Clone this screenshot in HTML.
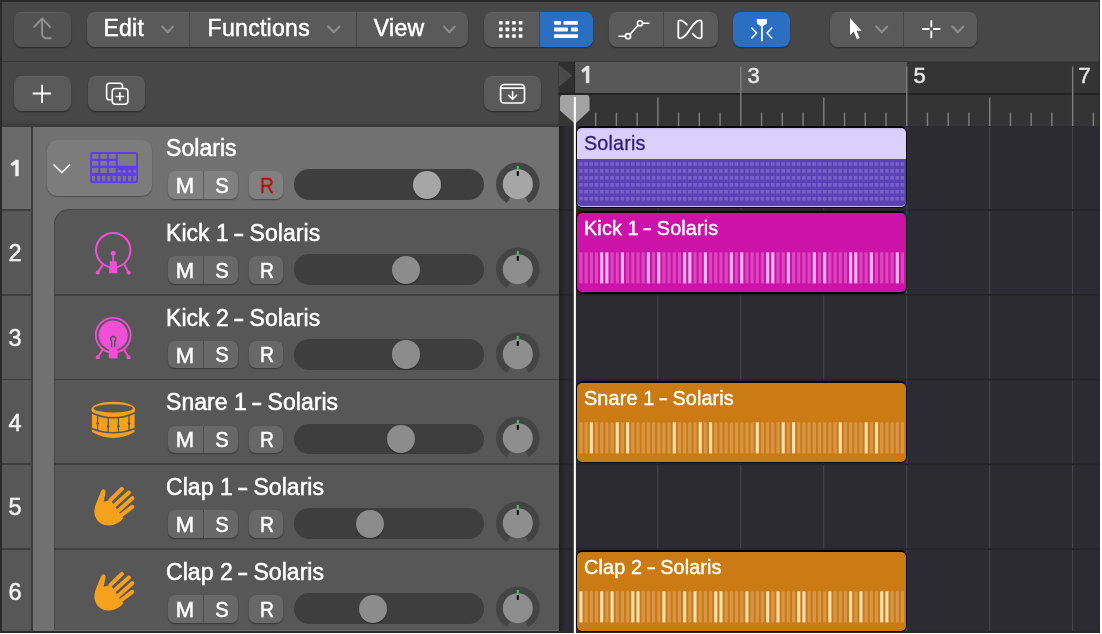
<!DOCTYPE html>
<html><head><meta charset="utf-8"><style>
html,body{margin:0;padding:0;width:1102px;height:634px;overflow:hidden;background:#fff;font-family:"Liberation Sans", sans-serif;}
#root{position:relative;width:1102px;height:634px;overflow:hidden;will-change:transform;}
svg{overflow:visible}
</style></head><body><div id="root">
<div style="position:absolute;left:0px;top:0px;width:1100px;height:633px;background:#2a2a2a"></div><div style="position:absolute;left:2px;top:2px;width:1097px;height:58.5px;background:#474747;box-shadow:inset 0 1px 0 rgba(255,255,255,.03)"></div><div style="position:absolute;left:2px;top:60.5px;width:1097px;height:1px;background:#3a3a3a"></div><div style="position:absolute;left:2px;top:61.5px;width:557px;height:65.5px;background:#474747"></div><div style="position:absolute;left:2px;top:123px;width:557px;height:4px;background:linear-gradient(#474747,#3f3f3f)"></div><div style="position:absolute;left:14px;top:12px;width:57px;height:35px;background:#525252;border-radius:8px;box-shadow:inset 0 1px 0 rgba(255,255,255,.07),0 1px 1.5px rgba(0,0,0,.45)"></div><svg style="position:absolute;left:14px;top:12px;" width="57" height="35" viewBox="14 12 57 35"><path d="M34.2 26.8 L42.1 18.3 L50 26.8 M42.1 18.8 L42.1 33.5 Q42.1 38.3 47 38.3 L50.8 38.3" fill="none" stroke="#929292" stroke-width="1.9" stroke-linecap="round" stroke-linejoin="round"/></svg><div style="position:absolute;left:87px;top:12px;width:381px;height:35px;background:#5a5a5a;border-radius:8px;box-shadow:inset 0 1px 0 rgba(255,255,255,.05),0 1px 1.5px rgba(0,0,0,.45)"></div><div style="position:absolute;left:189.3px;top:12px;width:1px;height:35px;background:#444"></div><div style="position:absolute;left:355.5px;top:12px;width:1px;height:35px;background:#444"></div><div style="position:absolute;left:103.4px;top:16.50px;font-size:23px;line-height:23px;color:#fff;white-space:nowrap;letter-spacing:0.3px;-webkit-text-stroke:0.5px #fff;">Edit</div><div style="position:absolute;left:207.6px;top:16.50px;font-size:23px;line-height:23px;color:#fff;white-space:nowrap;letter-spacing:0.3px;-webkit-text-stroke:0.5px #fff;">Functions</div><div style="position:absolute;left:373.8px;top:16.50px;font-size:23px;line-height:23px;color:#fff;white-space:nowrap;letter-spacing:0.3px;-webkit-text-stroke:0.5px #fff;">View</div><svg style="position:absolute;left:150px;top:15px;" width="320" height="30" viewBox="150 15 320 30"><path d="M162.4 26.6 L167.7 32.3 L173.0 26.6" fill="none" stroke="#8e8e8e" stroke-width="2.1" stroke-linecap="round" stroke-linejoin="round"/><path d="M328.2 26.6 L333.79999999999995 32.3 L339.4 26.6" fill="none" stroke="#8e8e8e" stroke-width="2.1" stroke-linecap="round" stroke-linejoin="round"/><path d="M444.1 26.6 L449.35 32.3 L454.6 26.6" fill="none" stroke="#8e8e8e" stroke-width="2.1" stroke-linecap="round" stroke-linejoin="round"/></svg><div style="position:absolute;left:484px;top:12px;width:109px;height:35px;background:#5a5a5a;border-radius:8px;box-shadow:inset 0 1px 0 rgba(255,255,255,.05),0 1px 1.5px rgba(0,0,0,.45)"></div><div style="position:absolute;left:539px;top:12px;width:54px;height:35px;background:#2b6fc3;border-radius:0 8px 8px 0"></div><div style="position:absolute;left:538.5px;top:12px;width:1px;height:35px;background:#444"></div><svg style="position:absolute;left:484px;top:12px;" width="109" height="35" viewBox="484 12 109 35"><rect x="499" y="21" width="3.6" height="3.6" rx="0.6" fill="#fff"/><rect x="499" y="27.6" width="3.6" height="3.6" rx="0.6" fill="#fff"/><rect x="499" y="34.2" width="3.6" height="3.6" rx="0.6" fill="#fff"/><rect x="505.6" y="21" width="3.6" height="3.6" rx="0.6" fill="#fff"/><rect x="505.6" y="27.6" width="3.6" height="3.6" rx="0.6" fill="#fff"/><rect x="505.6" y="34.2" width="3.6" height="3.6" rx="0.6" fill="#fff"/><rect x="512.2" y="21" width="3.6" height="3.6" rx="0.6" fill="#fff"/><rect x="512.2" y="27.6" width="3.6" height="3.6" rx="0.6" fill="#fff"/><rect x="512.2" y="34.2" width="3.6" height="3.6" rx="0.6" fill="#fff"/><rect x="518.8" y="21" width="3.6" height="3.6" rx="0.6" fill="#fff"/><rect x="518.8" y="27.6" width="3.6" height="3.6" rx="0.6" fill="#fff"/><rect x="518.8" y="34.2" width="3.6" height="3.6" rx="0.6" fill="#fff"/><rect x="554" y="21" width="7" height="3.8" rx="0.8" fill="#fff"/><rect x="563.5" y="21" width="14.5" height="3.8" rx="0.8" fill="#fff"/><rect x="554" y="27.6" width="14" height="3.8" rx="0.8" fill="#fff"/><rect x="571" y="27.6" width="7" height="3.8" rx="0.8" fill="#fff"/><rect x="554" y="34.2" width="24" height="3.8" rx="0.8" fill="#fff"/></svg><div style="position:absolute;left:609px;top:12px;width:108.5px;height:35px;background:#5a5a5a;border-radius:8px;box-shadow:inset 0 1px 0 rgba(255,255,255,.05),0 1px 1.5px rgba(0,0,0,.45)"></div><div style="position:absolute;left:663px;top:12px;width:1px;height:35px;background:#444"></div><svg style="position:absolute;left:609px;top:12px;" width="109" height="35" viewBox="609 12 109 35"><path d="M619 36.2 L625.5 36.2 M630.2 34.3 L638 25.3 M642.5 23.3 L649 23.3" stroke="#fff" stroke-width="1.6" stroke-linecap="round" fill="none"/><circle cx="628" cy="36.2" r="2.6" stroke="#fff" stroke-width="1.6" fill="none"/><circle cx="640" cy="23.3" r="2.6" stroke="#fff" stroke-width="1.6" fill="none"/><path d="M686.8 24.7 C684.5 22 682 20.3 680 20.3 Q678.3 20.3 678.3 22.3 L678.3 36.3 Q678.3 38.3 680.3 38.3 C688 38.3 692 20.3 699.7 20.3 Q701.7 20.3 701.7 22.3 L701.7 36.3 Q701.7 38.3 699.7 38.3 C697.5 38.3 695 36.5 692.7 33.7" stroke="#fff" stroke-width="1.8" fill="none" stroke-linecap="round" stroke-linejoin="round"/></svg><div style="position:absolute;left:733px;top:12px;width:57px;height:35px;background:#2b6fc3;border-radius:8px;box-shadow:0 1px 1.5px rgba(0,0,0,.45)"></div><svg style="position:absolute;left:733px;top:12px;" width="57" height="35" viewBox="733 12 57 35"><path d="M756.8 18.9 L767 18.9 L767 22 Q767 24.5 764 25.3 L762.8 26.2 L760.8 26.2 L759.6 25.3 Q756.8 24.5 756.8 22 Z" fill="#fff"/><rect x="761" y="25" width="1.8" height="16.3" fill="#fff"/><path d="M751.8 28 L756.6 33 L751.8 38 M771.8 28 L767 33 L771.8 38" stroke="#fff" stroke-width="1.5" fill="none" stroke-linecap="round" stroke-linejoin="round"/></svg><div style="position:absolute;left:830px;top:12px;width:146.5px;height:35px;background:#5a5a5a;border-radius:8px;box-shadow:inset 0 1px 0 rgba(255,255,255,.05),0 1px 1.5px rgba(0,0,0,.45)"></div><div style="position:absolute;left:903.2px;top:12px;width:1px;height:35px;background:#444"></div><svg style="position:absolute;left:825px;top:10px;" width="160" height="40" viewBox="825 10 160 40"><path d="M850 17.9 L850 35.2 L853.6 31.6 L857 39.3 L859.7 38.1 L856.4 30.7 L861.5 30.7 Z" fill="#fff"/><path d="M922 29 L929.5 29 M933 29 L940.4 29 M931.3 20.3 L931.3 27.2 M931.3 30.8 L931.3 38.2" stroke="#fff" stroke-width="1.8" fill="none" stroke-linecap="butt"/><path d="M876.2 26.6 L881.7 32.3 L887.2 26.6" fill="none" stroke="#8e8e8e" stroke-width="2.1" stroke-linecap="round" stroke-linejoin="round"/><path d="M952.4 26.6 L957.8499999999999 32.3 L963.3 26.6" fill="none" stroke="#8e8e8e" stroke-width="2.1" stroke-linecap="round" stroke-linejoin="round"/></svg><div style="position:absolute;left:14px;top:76px;width:57px;height:35px;background:#5a5a5a;border-radius:8px;box-shadow:inset 0 1px 0 rgba(255,255,255,.05),0 1px 1.5px rgba(0,0,0,.45)"></div><svg style="position:absolute;left:14px;top:76px;" width="57" height="35" viewBox="14 76 57 35"><path d="M32.7 93.5 L51.1 93.5 M42.1 84.8 L42.1 102.9" stroke="#fff" stroke-width="1.8" fill="none"/></svg><div style="position:absolute;left:88px;top:76px;width:57px;height:35px;background:#5a5a5a;border-radius:8px;box-shadow:inset 0 1px 0 rgba(255,255,255,.05),0 1px 1.5px rgba(0,0,0,.45)"></div><svg style="position:absolute;left:88px;top:76px;" width="57" height="35" viewBox="88 76 57 35"><path d="M111.8 99.8 L109.5 99.8 Q106.6 99.8 106.6 96.9 L106.6 86.2 Q106.6 83.3 109.5 83.3 L119.6 83.3 Q122.5 83.3 122.5 86.2 L122.5 88.4" stroke="#fff" stroke-width="1.6" fill="none"/><rect x="112.2" y="88.5" width="15.7" height="15.8" rx="3.2" stroke="#fff" stroke-width="1.6" fill="none"/><path d="M119.9 92.2 L119.9 100.8 M115.6 96.5 L124.2 96.5" stroke="#fff" stroke-width="1.7" fill="none"/></svg><div style="position:absolute;left:484px;top:76px;width:57px;height:35px;background:#5a5a5a;border-radius:8px;box-shadow:inset 0 1px 0 rgba(255,255,255,.05),0 1px 1.5px rgba(0,0,0,.45)"></div><svg style="position:absolute;left:484px;top:76px;" width="57" height="35" viewBox="484 76 57 35"><rect x="500.6" y="84.5" width="23.9" height="18.5" rx="3.4" stroke="#fff" stroke-width="1.7" fill="none"/><path d="M500.6 88.1 L524.5 88.1" stroke="#fff" stroke-width="1.7"/><path d="M512.6 91.6 L512.6 99.2 M508.6 95.3 L512.6 99.3 L516.6 95.3" stroke="#fff" stroke-width="1.6" fill="none" stroke-linecap="round" stroke-linejoin="round"/></svg><div style="position:absolute;left:557.5px;top:61.5px;width:1.5px;height:65px;background:#3c3c3c"></div><div style="position:absolute;left:559px;top:61.5px;width:540px;height:31.5px;background:#343434"></div><div style="position:absolute;left:575px;top:61.5px;width:331.5px;height:32px;background:#585858"></div><div style="position:absolute;left:559px;top:61.5px;width:15.5px;height:31.5px;background:#2f2f2f"></div><div style="position:absolute;left:559px;top:93.3px;width:540px;height:32.7px;background:#343434"></div><div style="position:absolute;left:559px;top:93.3px;width:540px;height:1.5px;background:#222222"></div><svg style="position:absolute;left:559px;top:61.5px;" width="20" height="32" viewBox="559 61.5 20 32"><path d="M559 64.5 L572.4 75 L559 86.2 Z" fill="#494949"/><line x1="574.5" y1="62" x2="574.5" y2="93" stroke="#1e1e1e" stroke-width="1.2" stroke-dasharray="1.2 1.2"/></svg><svg style="position:absolute;left:559px;top:61.5px;" width="540" height="65" viewBox="559 61.5 540 65"><rect x="594.94" y="112" width="1.4" height="14" fill="#7f7f7f"/><rect x="615.68" y="112" width="1.4" height="14" fill="#7f7f7f"/><rect x="636.42" y="112" width="1.4" height="14" fill="#7f7f7f"/><rect x="657.16" y="97" width="1.4" height="29" fill="#7f7f7f"/><rect x="677.90" y="112" width="1.4" height="14" fill="#7f7f7f"/><rect x="698.64" y="112" width="1.4" height="14" fill="#7f7f7f"/><rect x="719.38" y="112" width="1.4" height="14" fill="#7f7f7f"/><rect x="740.12" y="66" width="1.4" height="60" fill="#7f7f7f"/><rect x="760.86" y="112" width="1.4" height="14" fill="#7f7f7f"/><rect x="781.60" y="112" width="1.4" height="14" fill="#7f7f7f"/><rect x="802.34" y="112" width="1.4" height="14" fill="#7f7f7f"/><rect x="823.08" y="97" width="1.4" height="29" fill="#7f7f7f"/><rect x="843.82" y="112" width="1.4" height="14" fill="#7f7f7f"/><rect x="864.56" y="112" width="1.4" height="14" fill="#7f7f7f"/><rect x="885.30" y="112" width="1.4" height="14" fill="#7f7f7f"/><rect x="906.04" y="66" width="1.4" height="60" fill="#7f7f7f"/><rect x="926.78" y="112" width="1.4" height="14" fill="#7f7f7f"/><rect x="947.52" y="112" width="1.4" height="14" fill="#7f7f7f"/><rect x="968.26" y="112" width="1.4" height="14" fill="#7f7f7f"/><rect x="989.00" y="97" width="1.4" height="29" fill="#7f7f7f"/><rect x="1009.74" y="112" width="1.4" height="14" fill="#7f7f7f"/><rect x="1030.48" y="112" width="1.4" height="14" fill="#7f7f7f"/><rect x="1051.22" y="112" width="1.4" height="14" fill="#7f7f7f"/><rect x="1071.96" y="66" width="1.4" height="60" fill="#7f7f7f"/><rect x="1092.70" y="112" width="1.4" height="14" fill="#7f7f7f"/></svg><div style="position:absolute;left:747.5px;top:64.50px;font-size:22px;line-height:22px;color:#e6e6e6;white-space:nowrap;letter-spacing:0.0px;-webkit-text-stroke:0.5px #e6e6e6;">3</div><div style="position:absolute;left:913.5px;top:64.50px;font-size:22px;line-height:22px;color:#e6e6e6;white-space:nowrap;letter-spacing:0.0px;-webkit-text-stroke:0.5px #e6e6e6;">5</div><div style="position:absolute;left:1078.5px;top:64.50px;font-size:22px;line-height:22px;color:#e6e6e6;white-space:nowrap;letter-spacing:0.0px;-webkit-text-stroke:0.5px #e6e6e6;">7</div><svg style="position:absolute;left:575px;top:60px;" width="20" height="30" viewBox="575 60 20 30"><path d="M589.1 66.1 L589.1 82.9 L586.1 82.9 L586.1 70.2 L582.9 72.6 L581.5 70.3 L586.6 66.1 Z" fill="#e6e6e6" stroke="#e6e6e6" stroke-width="0.4" stroke-linejoin="round"/></svg><div style="position:absolute;left:559px;top:126px;width:540px;height:504.5px;background:#2c2b33"></div><svg style="position:absolute;left:559px;top:126.5px;" width="540" height="505" viewBox="559 126.5 540 505"><rect x="657.16" y="126.5" width="1.2" height="504" fill="#45434d"/><rect x="740.12" y="126.5" width="1.2" height="504" fill="#45434d"/><rect x="823.08" y="126.5" width="1.2" height="504" fill="#45434d"/><rect x="906.04" y="126.5" width="1.2" height="504" fill="#45434d"/><rect x="989.00" y="126.5" width="1.2" height="504" fill="#45434d"/><rect x="1071.96" y="126.5" width="1.2" height="504" fill="#45434d"/><rect x="559" y="208.77" width="540" height="1.6" fill="#25242b"/><rect x="559" y="293.54" width="540" height="1.6" fill="#25242b"/><rect x="559" y="378.31" width="540" height="1.6" fill="#25242b"/><rect x="559" y="463.08" width="540" height="1.6" fill="#25242b"/><rect x="559" y="547.85" width="540" height="1.6" fill="#25242b"/></svg><div style="position:absolute;left:559px;top:126px;width:7px;height:504.5px;background:linear-gradient(90deg,rgba(0,0,0,.28),rgba(0,0,0,0))"></div><div style="position:absolute;left:2px;top:127px;width:29px;height:503.5px;background:#575757"></div><div style="position:absolute;left:2px;top:127px;width:29px;height:82.77px;background:#6a6a6a"></div><div style="position:absolute;left:31px;top:126.5px;width:2px;height:504px;background:#3c3c3c"></div><div style="position:absolute;left:33px;top:127px;width:526px;height:503.5px;background:#717171"></div><div style="position:absolute;left:53.6px;top:209.3px;width:505.4px;height:421.2px;background:#454545;border-top-left-radius:15px"></div><div style="position:absolute;left:54.7px;top:210.4px;width:504.3px;height:420.1px;background:#575757;border-top-left-radius:14px"></div><div style="position:absolute;left:2px;top:119px;width:557px;height:8px;background:linear-gradient(rgba(0,0,0,0),rgba(0,0,0,.13))"></div><div style="position:absolute;left:2px;top:208.97px;width:29px;height:1.8px;background:#3e3e3e"></div><div style="position:absolute;left:2px;top:293.74px;width:29px;height:1.8px;background:#3e3e3e"></div><div style="position:absolute;left:54.7px;top:293.74px;width:504.3px;height:1.8px;background:#414141"></div><div style="position:absolute;left:2px;top:378.51px;width:29px;height:1.8px;background:#3e3e3e"></div><div style="position:absolute;left:54.7px;top:378.51px;width:504.3px;height:1.8px;background:#414141"></div><div style="position:absolute;left:2px;top:463.28px;width:29px;height:1.8px;background:#3e3e3e"></div><div style="position:absolute;left:54.7px;top:463.28px;width:504.3px;height:1.8px;background:#414141"></div><div style="position:absolute;left:2px;top:548.05px;width:29px;height:1.8px;background:#3e3e3e"></div><div style="position:absolute;left:54.7px;top:548.05px;width:504.3px;height:1.8px;background:#414141"></div><svg style="position:absolute;left:5px;top:150px;" width="20" height="30" viewBox="5 150 20 30"><path d="M18.5 159.9 L18.5 175.9 L15.4 175.9 L15.4 164.0 L12.1 166.2 L10.8 163.8 L15.9 159.9 Z" fill="#f2f2f2" stroke="#f2f2f2" stroke-width="0.4" stroke-linejoin="round"/></svg><div style="position:absolute;left:166px;top:136.50px;font-size:23px;line-height:23px;color:#fff;white-space:nowrap;letter-spacing:0.05px;-webkit-text-stroke:0.5px #fff;">Solaris</div><div style="position:absolute;left:168px;top:171.30px;width:70px;height:27.6px;background:#808080;border-radius:7px;box-shadow:0 1px 1.5px rgba(0,0,0,.4)"></div><div style="position:absolute;left:203px;top:171.30px;width:1px;height:27.6px;background:#5e5e5e"></div><div style="position:absolute;left:249px;top:171.30px;width:34.2px;height:27.6px;background:#808080;border-radius:7px;box-shadow:0 1px 1.5px rgba(0,0,0,.4)"></div><div style="position:absolute;left:135px;width:100px;text-align:center;top:174.50px;font-size:22px;line-height:22px;color:#fff;white-space:nowrap;letter-spacing:0.0px;-webkit-text-stroke:0.5px #fff;">M</div><div style="position:absolute;left:171.5px;width:100px;text-align:center;top:175.25px;font-size:22.5px;line-height:22.5px;color:#fff;white-space:nowrap;letter-spacing:0.0px;-webkit-text-stroke:0.5px #fff;transform:scaleX(0.9);">S</div><div style="position:absolute;left:217.39999999999998px;width:100px;text-align:center;top:175.25px;font-size:22.5px;line-height:22.5px;color:#bb0f0d;white-space:nowrap;letter-spacing:0.0px;-webkit-text-stroke:0.3px #bb0f0d;transform:scaleX(0.86);">R</div><div style="position:absolute;left:294px;top:169.40px;width:190px;height:30.6px;background:#3e3e3e;border-radius:15.3px"></div><div style="position:absolute;left:412.90px;top:170.90px;width:28.2px;height:28.2px;background:#a6a6a6;border-radius:50%;box-shadow:0 1px 1px rgba(0,0,0,.35)"></div><svg style="position:absolute;left:490px;top:156.00px;" width="60" height="60" viewBox="490 156.00 60 60"><path d="M508.70 199.96 A18.2 18.2 0 1 1 526.90 199.96" stroke="#444444" stroke-width="7" fill="none"/><circle cx="517.8" cy="184.20" r="15" fill="#a6a6a6"/><rect x="516.8" y="165.90" width="2" height="3.8" fill="#3ed35a"/><rect x="516.8" y="171.00" width="2" height="4.8" fill="#000"/></svg><div style="position:absolute;left:-35px;width:100px;text-align:center;top:242.25px;font-size:23.5px;line-height:23.5px;color:#f2f2f2;white-space:nowrap;letter-spacing:0.0px;-webkit-text-stroke:0.5px #f2f2f2;">2</div><div style="position:absolute;left:166px;top:221.50px;font-size:23px;line-height:23px;color:#fff;white-space:nowrap;letter-spacing:0.05px;-webkit-text-stroke:0.5px #fff;">Kick 1 <span style="display:inline-block;transform:scaleX(1.45)">-</span> Solaris</div><div style="position:absolute;left:168px;top:256.07px;width:70px;height:27.6px;background:#686868;border-radius:7px;box-shadow:0 1px 1.5px rgba(0,0,0,.4)"></div><div style="position:absolute;left:203px;top:256.07px;width:1px;height:27.6px;background:#4d4d4d"></div><div style="position:absolute;left:249px;top:256.07px;width:34.2px;height:27.6px;background:#686868;border-radius:7px;box-shadow:0 1px 1.5px rgba(0,0,0,.4)"></div><div style="position:absolute;left:135px;width:100px;text-align:center;top:259.50px;font-size:22px;line-height:22px;color:#fff;white-space:nowrap;letter-spacing:0.0px;-webkit-text-stroke:0.5px #fff;">M</div><div style="position:absolute;left:171.5px;width:100px;text-align:center;top:260.25px;font-size:22.5px;line-height:22.5px;color:#fff;white-space:nowrap;letter-spacing:0.0px;-webkit-text-stroke:0.5px #fff;transform:scaleX(0.9);">S</div><div style="position:absolute;left:217.39999999999998px;width:100px;text-align:center;top:260.25px;font-size:22.5px;line-height:22.5px;color:#fff;white-space:nowrap;letter-spacing:0.0px;-webkit-text-stroke:0.5px #fff;transform:scaleX(0.86);">R</div><div style="position:absolute;left:294px;top:254.17px;width:190px;height:30.6px;background:#3e3e3e;border-radius:15.3px"></div><div style="position:absolute;left:392.10px;top:255.67px;width:28.2px;height:28.2px;background:#8c8c8c;border-radius:50%;box-shadow:0 1px 1px rgba(0,0,0,.35)"></div><svg style="position:absolute;left:490px;top:240.77px;" width="60" height="60" viewBox="490 240.77 60 60"><path d="M508.70 284.73 A18.2 18.2 0 1 1 526.90 284.73" stroke="#444444" stroke-width="7" fill="none"/><circle cx="517.8" cy="268.97" r="15" fill="#8e8e8e"/><rect x="516.8" y="250.67" width="2" height="3.8" fill="#3ed35a"/><rect x="516.8" y="255.77" width="2" height="4.8" fill="#000"/></svg><div style="position:absolute;left:-35px;width:100px;text-align:center;top:327.25px;font-size:23.5px;line-height:23.5px;color:#f2f2f2;white-space:nowrap;letter-spacing:0.0px;-webkit-text-stroke:0.5px #f2f2f2;">3</div><div style="position:absolute;left:166px;top:306.50px;font-size:23px;line-height:23px;color:#fff;white-space:nowrap;letter-spacing:0.05px;-webkit-text-stroke:0.5px #fff;">Kick 2 <span style="display:inline-block;transform:scaleX(1.45)">-</span> Solaris</div><div style="position:absolute;left:168px;top:340.84px;width:70px;height:27.6px;background:#686868;border-radius:7px;box-shadow:0 1px 1.5px rgba(0,0,0,.4)"></div><div style="position:absolute;left:203px;top:340.84px;width:1px;height:27.6px;background:#4d4d4d"></div><div style="position:absolute;left:249px;top:340.84px;width:34.2px;height:27.6px;background:#686868;border-radius:7px;box-shadow:0 1px 1.5px rgba(0,0,0,.4)"></div><div style="position:absolute;left:135px;width:100px;text-align:center;top:344.50px;font-size:22px;line-height:22px;color:#fff;white-space:nowrap;letter-spacing:0.0px;-webkit-text-stroke:0.5px #fff;">M</div><div style="position:absolute;left:171.5px;width:100px;text-align:center;top:344.25px;font-size:22.5px;line-height:22.5px;color:#fff;white-space:nowrap;letter-spacing:0.0px;-webkit-text-stroke:0.5px #fff;transform:scaleX(0.9);">S</div><div style="position:absolute;left:217.39999999999998px;width:100px;text-align:center;top:344.25px;font-size:22.5px;line-height:22.5px;color:#fff;white-space:nowrap;letter-spacing:0.0px;-webkit-text-stroke:0.5px #fff;transform:scaleX(0.86);">R</div><div style="position:absolute;left:294px;top:338.94px;width:190px;height:30.6px;background:#3e3e3e;border-radius:15.3px"></div><div style="position:absolute;left:392.10px;top:340.44px;width:28.2px;height:28.2px;background:#8c8c8c;border-radius:50%;box-shadow:0 1px 1px rgba(0,0,0,.35)"></div><svg style="position:absolute;left:490px;top:325.54px;" width="60" height="60" viewBox="490 325.54 60 60"><path d="M508.70 369.50 A18.2 18.2 0 1 1 526.90 369.50" stroke="#444444" stroke-width="7" fill="none"/><circle cx="517.8" cy="353.74" r="15" fill="#8e8e8e"/><rect x="516.8" y="335.44" width="2" height="3.8" fill="#3ed35a"/><rect x="516.8" y="340.54" width="2" height="4.8" fill="#000"/></svg><div style="position:absolute;left:-35px;width:100px;text-align:center;top:412.25px;font-size:23.5px;line-height:23.5px;color:#f2f2f2;white-space:nowrap;letter-spacing:0.0px;-webkit-text-stroke:0.5px #f2f2f2;">4</div><div style="position:absolute;left:166px;top:390.50px;font-size:23px;line-height:23px;color:#fff;white-space:nowrap;letter-spacing:0.05px;-webkit-text-stroke:0.5px #fff;">Snare 1 <span style="display:inline-block;transform:scaleX(1.45)">-</span> Solaris</div><div style="position:absolute;left:168px;top:425.61px;width:70px;height:27.6px;background:#686868;border-radius:7px;box-shadow:0 1px 1.5px rgba(0,0,0,.4)"></div><div style="position:absolute;left:203px;top:425.61px;width:1px;height:27.6px;background:#4d4d4d"></div><div style="position:absolute;left:249px;top:425.61px;width:34.2px;height:27.6px;background:#686868;border-radius:7px;box-shadow:0 1px 1.5px rgba(0,0,0,.4)"></div><div style="position:absolute;left:135px;width:100px;text-align:center;top:428.50px;font-size:22px;line-height:22px;color:#fff;white-space:nowrap;letter-spacing:0.0px;-webkit-text-stroke:0.5px #fff;">M</div><div style="position:absolute;left:171.5px;width:100px;text-align:center;top:429.25px;font-size:22.5px;line-height:22.5px;color:#fff;white-space:nowrap;letter-spacing:0.0px;-webkit-text-stroke:0.5px #fff;transform:scaleX(0.9);">S</div><div style="position:absolute;left:217.39999999999998px;width:100px;text-align:center;top:429.25px;font-size:22.5px;line-height:22.5px;color:#fff;white-space:nowrap;letter-spacing:0.0px;-webkit-text-stroke:0.5px #fff;transform:scaleX(0.86);">R</div><div style="position:absolute;left:294px;top:423.71px;width:190px;height:30.6px;background:#3e3e3e;border-radius:15.3px"></div><div style="position:absolute;left:386.90px;top:425.21px;width:28.2px;height:28.2px;background:#8c8c8c;border-radius:50%;box-shadow:0 1px 1px rgba(0,0,0,.35)"></div><svg style="position:absolute;left:490px;top:410.31px;" width="60" height="60" viewBox="490 410.31 60 60"><path d="M508.70 454.27 A18.2 18.2 0 1 1 526.90 454.27" stroke="#444444" stroke-width="7" fill="none"/><circle cx="517.8" cy="438.51" r="15" fill="#8e8e8e"/><rect x="516.8" y="420.21" width="2" height="3.8" fill="#3ed35a"/><rect x="516.8" y="425.31" width="2" height="4.8" fill="#000"/></svg><div style="position:absolute;left:-35px;width:100px;text-align:center;top:496.25px;font-size:23.5px;line-height:23.5px;color:#f2f2f2;white-space:nowrap;letter-spacing:0.0px;-webkit-text-stroke:0.5px #f2f2f2;">5</div><div style="position:absolute;left:166px;top:475.50px;font-size:23px;line-height:23px;color:#fff;white-space:nowrap;letter-spacing:0.05px;-webkit-text-stroke:0.5px #fff;">Clap 1 <span style="display:inline-block;transform:scaleX(1.45)">-</span> Solaris</div><div style="position:absolute;left:168px;top:510.38px;width:70px;height:27.6px;background:#686868;border-radius:7px;box-shadow:0 1px 1.5px rgba(0,0,0,.4)"></div><div style="position:absolute;left:203px;top:510.38px;width:1px;height:27.6px;background:#4d4d4d"></div><div style="position:absolute;left:249px;top:510.38px;width:34.2px;height:27.6px;background:#686868;border-radius:7px;box-shadow:0 1px 1.5px rgba(0,0,0,.4)"></div><div style="position:absolute;left:135px;width:100px;text-align:center;top:513.50px;font-size:22px;line-height:22px;color:#fff;white-space:nowrap;letter-spacing:0.0px;-webkit-text-stroke:0.5px #fff;">M</div><div style="position:absolute;left:171.5px;width:100px;text-align:center;top:514.25px;font-size:22.5px;line-height:22.5px;color:#fff;white-space:nowrap;letter-spacing:0.0px;-webkit-text-stroke:0.5px #fff;transform:scaleX(0.9);">S</div><div style="position:absolute;left:217.39999999999998px;width:100px;text-align:center;top:514.25px;font-size:22.5px;line-height:22.5px;color:#fff;white-space:nowrap;letter-spacing:0.0px;-webkit-text-stroke:0.5px #fff;transform:scaleX(0.86);">R</div><div style="position:absolute;left:294px;top:508.48px;width:190px;height:30.6px;background:#3e3e3e;border-radius:15.3px"></div><div style="position:absolute;left:355.80px;top:509.98px;width:28.2px;height:28.2px;background:#8c8c8c;border-radius:50%;box-shadow:0 1px 1px rgba(0,0,0,.35)"></div><svg style="position:absolute;left:490px;top:495.08px;" width="60" height="60" viewBox="490 495.08 60 60"><path d="M508.70 539.04 A18.2 18.2 0 1 1 526.90 539.04" stroke="#444444" stroke-width="7" fill="none"/><circle cx="517.8" cy="523.28" r="15" fill="#8e8e8e"/><rect x="516.8" y="504.98" width="2" height="3.8" fill="#3ed35a"/><rect x="516.8" y="510.08" width="2" height="4.8" fill="#000"/></svg><div style="position:absolute;left:-35px;width:100px;text-align:center;top:581.25px;font-size:23.5px;line-height:23.5px;color:#f2f2f2;white-space:nowrap;letter-spacing:0.0px;-webkit-text-stroke:0.5px #f2f2f2;">6</div><div style="position:absolute;left:166px;top:560.50px;font-size:23px;line-height:23px;color:#fff;white-space:nowrap;letter-spacing:0.05px;-webkit-text-stroke:0.5px #fff;">Clap 2 <span style="display:inline-block;transform:scaleX(1.45)">-</span> Solaris</div><div style="position:absolute;left:168px;top:595.15px;width:70px;height:27.6px;background:#686868;border-radius:7px;box-shadow:0 1px 1.5px rgba(0,0,0,.4)"></div><div style="position:absolute;left:203px;top:595.15px;width:1px;height:27.6px;background:#4d4d4d"></div><div style="position:absolute;left:249px;top:595.15px;width:34.2px;height:27.6px;background:#686868;border-radius:7px;box-shadow:0 1px 1.5px rgba(0,0,0,.4)"></div><div style="position:absolute;left:135px;width:100px;text-align:center;top:598.50px;font-size:22px;line-height:22px;color:#fff;white-space:nowrap;letter-spacing:0.0px;-webkit-text-stroke:0.5px #fff;">M</div><div style="position:absolute;left:171.5px;width:100px;text-align:center;top:599.25px;font-size:22.5px;line-height:22.5px;color:#fff;white-space:nowrap;letter-spacing:0.0px;-webkit-text-stroke:0.5px #fff;transform:scaleX(0.9);">S</div><div style="position:absolute;left:217.39999999999998px;width:100px;text-align:center;top:599.25px;font-size:22.5px;line-height:22.5px;color:#fff;white-space:nowrap;letter-spacing:0.0px;-webkit-text-stroke:0.5px #fff;transform:scaleX(0.86);">R</div><div style="position:absolute;left:294px;top:593.25px;width:190px;height:30.6px;background:#3e3e3e;border-radius:15.3px"></div><div style="position:absolute;left:359.20px;top:594.75px;width:28.2px;height:28.2px;background:#8c8c8c;border-radius:50%;box-shadow:0 1px 1px rgba(0,0,0,.35)"></div><svg style="position:absolute;left:490px;top:579.85px;" width="60" height="60" viewBox="490 579.85 60 60"><path d="M508.70 623.81 A18.2 18.2 0 1 1 526.90 623.81" stroke="#444444" stroke-width="7" fill="none"/><circle cx="517.8" cy="608.05" r="15" fill="#8e8e8e"/><rect x="516.8" y="589.75" width="2" height="3.8" fill="#3ed35a"/><rect x="516.8" y="594.85" width="2" height="4.8" fill="#000"/></svg><div style="position:absolute;left:47px;top:140px;width:105px;height:55.5px;background:#7c7c7c;border-radius:10px;box-shadow:0 1px 1.5px rgba(0,0,0,.35)"></div><svg style="position:absolute;left:47px;top:140px;" width="105" height="56" viewBox="47 140 105 56"><path d="M54 165 L61.75 172.5 L69.5 165" fill="none" stroke="#fff" stroke-width="1.7" stroke-linecap="round" stroke-linejoin="round"/></svg><svg style="position:absolute;left:86px;top:148px;" width="56" height="40" viewBox="86 148 56 40"><rect x="90.1" y="152.1" width="47.9" height="30.9" rx="1.8" fill="#5e3bf2"/><rect x="92" y="154" width="6.30" height="4.70" fill="#7c7c7c"/><rect x="100.2" y="154" width="6.90" height="4.70" fill="#7c7c7c"/><rect x="109" y="154" width="6.80" height="4.70" fill="#7c7c7c"/><rect x="92" y="160.9" width="6.30" height="4.80" fill="#7c7c7c"/><rect x="100.2" y="160.9" width="6.90" height="4.80" fill="#7c7c7c"/><rect x="109" y="160.9" width="6.80" height="4.80" fill="#7c7c7c"/><rect x="92" y="168" width="6.30" height="4.90" fill="#7c7c7c"/><rect x="100.2" y="168" width="6.90" height="4.90" fill="#7c7c7c"/><rect x="109" y="168" width="6.80" height="4.90" fill="#7c7c7c"/><rect x="117.8" y="154" width="18.3" height="11.8" fill="#7c7c7c"/><circle cx="119.3" cy="171.3" r="1.5" fill="#7c7c7c"/><circle cx="124.3" cy="171.3" r="1.5" fill="#7c7c7c"/><circle cx="129.5" cy="171.3" r="1.5" fill="#7c7c7c"/><circle cx="134.7" cy="171.3" r="1.5" fill="#7c7c7c"/><rect x="92.00" y="176" width="3" height="5.1" fill="#7c7c7c"/><rect x="97.15" y="176" width="3" height="5.1" fill="#7c7c7c"/><rect x="102.30" y="176" width="3" height="5.1" fill="#7c7c7c"/><rect x="107.45" y="176" width="3" height="5.1" fill="#7c7c7c"/><rect x="112.60" y="176" width="3" height="5.1" fill="#7c7c7c"/><rect x="117.75" y="176" width="3" height="5.1" fill="#7c7c7c"/><rect x="122.90" y="176" width="3" height="5.1" fill="#7c7c7c"/><rect x="128.05" y="176" width="3" height="5.1" fill="#7c7c7c"/><rect x="133.20" y="176" width="3" height="5.1" fill="#7c7c7c"/></svg><svg style="position:absolute;left:80px;top:210.77px;" width="70" height="85" viewBox="80 210.77 70 85"><circle cx="113.2" cy="249.97" r="17.2" stroke="#f24fd9" stroke-width="2" fill="none"/><circle cx="113.2" cy="252.97" r="2.5" fill="#f24fd9"/><rect x="112.3" y="252.97" width="1.8" height="9" fill="#f24fd9"/><path d="M109.9 261.07 L116.6 261.07 L117.5 273.07 L108.9 273.07 Z" fill="#f24fd9"/><path d="M97.8 272.27 L102.8 264.57 M128.6 272.27 L124.4 264.57" stroke="#f24fd9" stroke-width="2"/><circle cx="97.8" cy="272.27" r="2.1" fill="#f24fd9"/><circle cx="128.6" cy="272.27" r="2.1" fill="#f24fd9"/></svg><svg style="position:absolute;left:80px;top:295.54px;" width="70" height="85" viewBox="80 295.54 70 85"><circle cx="113.2" cy="334.74" r="17.4" stroke="#f24fd9" stroke-width="1.8" fill="none"/><circle cx="113.2" cy="334.74" r="14.6" fill="#f24fd9"/><circle cx="113.2" cy="338.54" r="3.2" fill="#575757"/><rect x="111" y="338.54" width="4.4" height="9" fill="#575757"/><circle cx="113.2" cy="338.54" r="1.8" fill="#f24fd9"/><rect x="112.4" y="338.74" width="1.6" height="8" fill="#f24fd9"/><path d="M108.8 346.74 L117.6 346.74 L117.6 357.94 L108.8 357.94 Z" fill="#f24fd9"/><path d="M97.8 356.74 L102.5 349.24 M128.6 356.74 L124.2 349.24" stroke="#f24fd9" stroke-width="1.8"/><circle cx="97.8" cy="356.74" r="2" fill="#f24fd9"/><circle cx="128.6" cy="356.74" r="2" fill="#f24fd9"/></svg><svg style="position:absolute;left:80px;top:380.31px;" width="70" height="85" viewBox="80 380.31 70 85"><path d="M92 410.54 L92 432.34 Q113.3 444.14 134.6 432.34 L134.6 410.54 Z" fill="#f7a01c"/><ellipse cx="113.3" cy="409.74" rx="21.8" ry="7.6" fill="#f7a01c"/><ellipse cx="113.3" cy="408.74" rx="19.6" ry="4.1" fill="#575757"/><path d="M91.5 413.04 Q113.3 423.24 135.1 413.04" stroke="#575757" stroke-width="1.5" fill="none"/><path d="M91.5 428.74 Q113.3 437.34 135.1 428.74" stroke="#575757" stroke-width="1.5" fill="none"/><rect x="96.95" y="415.34" width="1.3" height="15.40" fill="#575757"/><path d="M96.00 423.74 L97.60 421.94 L99.20 423.74 L97.60 425.54 Z" fill="#575757"/><rect x="107.55" y="417.84" width="1.3" height="15.00" fill="#575757"/><path d="M106.60 426.54 L108.20 424.74 L109.80 426.54 L108.20 428.34 Z" fill="#575757"/><rect x="117.75" y="417.84" width="1.3" height="15.00" fill="#575757"/><path d="M116.80 426.54 L118.40 424.74 L120.00 426.54 L118.40 428.34 Z" fill="#575757"/><rect x="128.35" y="415.34" width="1.3" height="15.40" fill="#575757"/><path d="M127.40 423.74 L129.00 421.94 L130.60 423.74 L129.00 425.54 Z" fill="#575757"/></svg><svg style="position:absolute;left:80px;top:465.08px;" width="70" height="85" viewBox="80 465.08 70 85"><path fill="#f7a01c" d="M101.2 491.04 Q103.4 487.94 105.4 490.74 Q105.9 492.04 105.2 494.04 L103.6 501.74 L110.5 500.04 L114.5 505.54 L118 511.04 L121 515.54 L123.5 518.04 Q118 525.04 110 525.54 Q98.5 526.04 95 516.04 Q93.2 509.54 96.5 502.54 Z"/><g stroke="#f7a01c" stroke-width="4.1" stroke-linecap="round"><line x1="121.9" y1="488.94" x2="110.5" y2="500.04"/><line x1="128.9" y1="492.64" x2="114.5" y2="505.54"/><line x1="132.3" y1="498.24" x2="118" y2="511.04"/><line x1="132.2" y1="506.94" x2="121" y2="515.54"/></g></svg><svg style="position:absolute;left:80px;top:549.85px;" width="70" height="85" viewBox="80 549.85 70 85"><path fill="#f7a01c" d="M101.2 575.81 Q103.4 572.71 105.4 575.51 Q105.9 576.81 105.2 578.81 L103.6 586.51 L110.5 584.81 L114.5 590.31 L118 595.81 L121 600.31 L123.5 602.81 Q118 609.81 110 610.31 Q98.5 610.81 95 600.81 Q93.2 594.31 96.5 587.31 Z"/><g stroke="#f7a01c" stroke-width="4.1" stroke-linecap="round"><line x1="121.9" y1="573.71" x2="110.5" y2="584.81"/><line x1="128.9" y1="577.41" x2="114.5" y2="590.31"/><line x1="132.3" y1="583.01" x2="118" y2="595.81"/><line x1="132.2" y1="591.71" x2="121" y2="600.31"/></g></svg><div style="position:absolute;left:575.8px;top:126.40px;width:331.70px;height:81.60px;background:#050507;border-radius:6.5px"></div><div style="position:absolute;left:577.2px;top:128.0px;width:328.79999999999995px;height:78.6px;background:#5a41b4;border-radius:5px;border-bottom:1.2px solid #c9bdf6;box-sizing:border-box"></div><div style="position:absolute;left:577.2px;top:128.0px;width:328.79999999999995px;height:31.4px;background:linear-gradient(#c4b9ec,#d8cffc 2.5px,#d9d0fc);border-radius:5px 5px 0 0"></div><div style="position:absolute;left:584px;top:134.10px;font-size:19.8px;line-height:19.8px;color:#2d1f78;white-space:nowrap;letter-spacing:0.15px;-webkit-text-stroke:0.3px #2d1f78;">Solaris</div><svg style="position:absolute;left:577.2px;top:128.0px;" width="328.79999999999995" height="78.6" viewBox="577.2 128.0 328.79999999999995 78.6"><rect x="579.30" y="162.20" width="3.6" height="3.6" fill="#7862c9"/><rect x="584.49" y="162.20" width="3.6" height="3.6" fill="#7862c9"/><rect x="589.67" y="162.20" width="3.6" height="3.6" fill="#7862c9"/><rect x="594.86" y="162.20" width="3.6" height="3.6" fill="#7862c9"/><rect x="600.04" y="162.20" width="3.6" height="3.6" fill="#7862c9"/><rect x="605.23" y="162.20" width="3.6" height="3.6" fill="#7862c9"/><rect x="610.42" y="162.20" width="3.6" height="3.6" fill="#7862c9"/><rect x="615.60" y="162.20" width="3.6" height="3.6" fill="#7862c9"/><rect x="620.79" y="162.20" width="3.6" height="3.6" fill="#7862c9"/><rect x="625.97" y="162.20" width="3.6" height="3.6" fill="#7862c9"/><rect x="631.16" y="162.20" width="3.6" height="3.6" fill="#7862c9"/><rect x="636.35" y="162.20" width="3.6" height="3.6" fill="#7862c9"/><rect x="641.53" y="162.20" width="3.6" height="3.6" fill="#7862c9"/><rect x="646.72" y="162.20" width="3.6" height="3.6" fill="#7862c9"/><rect x="651.90" y="162.20" width="3.6" height="3.6" fill="#7862c9"/><rect x="657.09" y="162.20" width="3.6" height="3.6" fill="#7862c9"/><rect x="662.28" y="162.20" width="3.6" height="3.6" fill="#7862c9"/><rect x="667.46" y="162.20" width="3.6" height="3.6" fill="#7862c9"/><rect x="672.65" y="162.20" width="3.6" height="3.6" fill="#7862c9"/><rect x="677.83" y="162.20" width="3.6" height="3.6" fill="#7862c9"/><rect x="683.02" y="162.20" width="3.6" height="3.6" fill="#7862c9"/><rect x="688.21" y="162.20" width="3.6" height="3.6" fill="#7862c9"/><rect x="693.39" y="162.20" width="3.6" height="3.6" fill="#7862c9"/><rect x="698.58" y="162.20" width="3.6" height="3.6" fill="#7862c9"/><rect x="703.76" y="162.20" width="3.6" height="3.6" fill="#7862c9"/><rect x="708.95" y="162.20" width="3.6" height="3.6" fill="#7862c9"/><rect x="714.14" y="162.20" width="3.6" height="3.6" fill="#7862c9"/><rect x="719.32" y="162.20" width="3.6" height="3.6" fill="#7862c9"/><rect x="724.51" y="162.20" width="3.6" height="3.6" fill="#7862c9"/><rect x="729.69" y="162.20" width="3.6" height="3.6" fill="#7862c9"/><rect x="734.88" y="162.20" width="3.6" height="3.6" fill="#7862c9"/><rect x="740.07" y="162.20" width="3.6" height="3.6" fill="#7862c9"/><rect x="745.25" y="162.20" width="3.6" height="3.6" fill="#7862c9"/><rect x="750.44" y="162.20" width="3.6" height="3.6" fill="#7862c9"/><rect x="755.62" y="162.20" width="3.6" height="3.6" fill="#7862c9"/><rect x="760.81" y="162.20" width="3.6" height="3.6" fill="#7862c9"/><rect x="766.00" y="162.20" width="3.6" height="3.6" fill="#7862c9"/><rect x="771.18" y="162.20" width="3.6" height="3.6" fill="#7862c9"/><rect x="776.37" y="162.20" width="3.6" height="3.6" fill="#7862c9"/><rect x="781.55" y="162.20" width="3.6" height="3.6" fill="#7862c9"/><rect x="786.74" y="162.20" width="3.6" height="3.6" fill="#7862c9"/><rect x="791.93" y="162.20" width="3.6" height="3.6" fill="#7862c9"/><rect x="797.11" y="162.20" width="3.6" height="3.6" fill="#7862c9"/><rect x="802.30" y="162.20" width="3.6" height="3.6" fill="#7862c9"/><rect x="807.48" y="162.20" width="3.6" height="3.6" fill="#7862c9"/><rect x="812.67" y="162.20" width="3.6" height="3.6" fill="#7862c9"/><rect x="817.86" y="162.20" width="3.6" height="3.6" fill="#7862c9"/><rect x="823.04" y="162.20" width="3.6" height="3.6" fill="#7862c9"/><rect x="828.23" y="162.20" width="3.6" height="3.6" fill="#7862c9"/><rect x="833.41" y="162.20" width="3.6" height="3.6" fill="#7862c9"/><rect x="838.60" y="162.20" width="3.6" height="3.6" fill="#7862c9"/><rect x="843.79" y="162.20" width="3.6" height="3.6" fill="#7862c9"/><rect x="848.97" y="162.20" width="3.6" height="3.6" fill="#7862c9"/><rect x="854.16" y="162.20" width="3.6" height="3.6" fill="#7862c9"/><rect x="859.34" y="162.20" width="3.6" height="3.6" fill="#7862c9"/><rect x="864.53" y="162.20" width="3.6" height="3.6" fill="#7862c9"/><rect x="869.72" y="162.20" width="3.6" height="3.6" fill="#7862c9"/><rect x="874.90" y="162.20" width="3.6" height="3.6" fill="#7862c9"/><rect x="880.09" y="162.20" width="3.6" height="3.6" fill="#7862c9"/><rect x="885.27" y="162.20" width="3.6" height="3.6" fill="#7862c9"/><rect x="890.46" y="162.20" width="3.6" height="3.6" fill="#7862c9"/><rect x="895.65" y="162.20" width="3.6" height="3.6" fill="#7862c9"/><rect x="900.83" y="162.20" width="3.6" height="3.6" fill="#7862c9"/><rect x="579.30" y="169.14" width="3.6" height="3.6" fill="#7862c9"/><rect x="584.49" y="169.14" width="3.6" height="3.6" fill="#7862c9"/><rect x="589.67" y="169.14" width="3.6" height="3.6" fill="#7862c9"/><rect x="594.86" y="169.14" width="3.6" height="3.6" fill="#7862c9"/><rect x="600.04" y="169.14" width="3.6" height="3.6" fill="#7862c9"/><rect x="605.23" y="169.14" width="3.6" height="3.6" fill="#7862c9"/><rect x="610.42" y="169.14" width="3.6" height="3.6" fill="#7862c9"/><rect x="615.60" y="169.14" width="3.6" height="3.6" fill="#7862c9"/><rect x="620.79" y="169.14" width="3.6" height="3.6" fill="#7862c9"/><rect x="625.97" y="169.14" width="3.6" height="3.6" fill="#7862c9"/><rect x="631.16" y="169.14" width="3.6" height="3.6" fill="#7862c9"/><rect x="636.35" y="169.14" width="3.6" height="3.6" fill="#7862c9"/><rect x="641.53" y="169.14" width="3.6" height="3.6" fill="#7862c9"/><rect x="646.72" y="169.14" width="3.6" height="3.6" fill="#7862c9"/><rect x="651.90" y="169.14" width="3.6" height="3.6" fill="#7862c9"/><rect x="657.09" y="169.14" width="3.6" height="3.6" fill="#7862c9"/><rect x="662.28" y="169.14" width="3.6" height="3.6" fill="#7862c9"/><rect x="667.46" y="169.14" width="3.6" height="3.6" fill="#7862c9"/><rect x="672.65" y="169.14" width="3.6" height="3.6" fill="#7862c9"/><rect x="677.83" y="169.14" width="3.6" height="3.6" fill="#7862c9"/><rect x="683.02" y="169.14" width="3.6" height="3.6" fill="#7862c9"/><rect x="688.21" y="169.14" width="3.6" height="3.6" fill="#7862c9"/><rect x="693.39" y="169.14" width="3.6" height="3.6" fill="#7862c9"/><rect x="698.58" y="169.14" width="3.6" height="3.6" fill="#7862c9"/><rect x="703.76" y="169.14" width="3.6" height="3.6" fill="#7862c9"/><rect x="708.95" y="169.14" width="3.6" height="3.6" fill="#7862c9"/><rect x="714.14" y="169.14" width="3.6" height="3.6" fill="#7862c9"/><rect x="719.32" y="169.14" width="3.6" height="3.6" fill="#7862c9"/><rect x="724.51" y="169.14" width="3.6" height="3.6" fill="#7862c9"/><rect x="729.69" y="169.14" width="3.6" height="3.6" fill="#7862c9"/><rect x="734.88" y="169.14" width="3.6" height="3.6" fill="#7862c9"/><rect x="740.07" y="169.14" width="3.6" height="3.6" fill="#7862c9"/><rect x="745.25" y="169.14" width="3.6" height="3.6" fill="#7862c9"/><rect x="750.44" y="169.14" width="3.6" height="3.6" fill="#7862c9"/><rect x="755.62" y="169.14" width="3.6" height="3.6" fill="#7862c9"/><rect x="760.81" y="169.14" width="3.6" height="3.6" fill="#7862c9"/><rect x="766.00" y="169.14" width="3.6" height="3.6" fill="#7862c9"/><rect x="771.18" y="169.14" width="3.6" height="3.6" fill="#7862c9"/><rect x="776.37" y="169.14" width="3.6" height="3.6" fill="#7862c9"/><rect x="781.55" y="169.14" width="3.6" height="3.6" fill="#7862c9"/><rect x="786.74" y="169.14" width="3.6" height="3.6" fill="#7862c9"/><rect x="791.93" y="169.14" width="3.6" height="3.6" fill="#7862c9"/><rect x="797.11" y="169.14" width="3.6" height="3.6" fill="#7862c9"/><rect x="802.30" y="169.14" width="3.6" height="3.6" fill="#7862c9"/><rect x="807.48" y="169.14" width="3.6" height="3.6" fill="#7862c9"/><rect x="812.67" y="169.14" width="3.6" height="3.6" fill="#7862c9"/><rect x="817.86" y="169.14" width="3.6" height="3.6" fill="#7862c9"/><rect x="823.04" y="169.14" width="3.6" height="3.6" fill="#7862c9"/><rect x="828.23" y="169.14" width="3.6" height="3.6" fill="#7862c9"/><rect x="833.41" y="169.14" width="3.6" height="3.6" fill="#7862c9"/><rect x="838.60" y="169.14" width="3.6" height="3.6" fill="#7862c9"/><rect x="843.79" y="169.14" width="3.6" height="3.6" fill="#7862c9"/><rect x="848.97" y="169.14" width="3.6" height="3.6" fill="#7862c9"/><rect x="854.16" y="169.14" width="3.6" height="3.6" fill="#7862c9"/><rect x="859.34" y="169.14" width="3.6" height="3.6" fill="#7862c9"/><rect x="864.53" y="169.14" width="3.6" height="3.6" fill="#7862c9"/><rect x="869.72" y="169.14" width="3.6" height="3.6" fill="#7862c9"/><rect x="874.90" y="169.14" width="3.6" height="3.6" fill="#7862c9"/><rect x="880.09" y="169.14" width="3.6" height="3.6" fill="#7862c9"/><rect x="885.27" y="169.14" width="3.6" height="3.6" fill="#7862c9"/><rect x="890.46" y="169.14" width="3.6" height="3.6" fill="#7862c9"/><rect x="895.65" y="169.14" width="3.6" height="3.6" fill="#7862c9"/><rect x="900.83" y="169.14" width="3.6" height="3.6" fill="#7862c9"/><rect x="579.30" y="176.08" width="3.6" height="3.6" fill="#7862c9"/><rect x="584.49" y="176.08" width="3.6" height="3.6" fill="#7862c9"/><rect x="589.67" y="176.08" width="3.6" height="3.6" fill="#7862c9"/><rect x="594.86" y="176.08" width="3.6" height="3.6" fill="#7862c9"/><rect x="600.04" y="176.08" width="3.6" height="3.6" fill="#7862c9"/><rect x="605.23" y="176.08" width="3.6" height="3.6" fill="#7862c9"/><rect x="610.42" y="176.08" width="3.6" height="3.6" fill="#7862c9"/><rect x="615.60" y="176.08" width="3.6" height="3.6" fill="#7862c9"/><rect x="620.79" y="176.08" width="3.6" height="3.6" fill="#7862c9"/><rect x="625.97" y="176.08" width="3.6" height="3.6" fill="#7862c9"/><rect x="631.16" y="176.08" width="3.6" height="3.6" fill="#7862c9"/><rect x="636.35" y="176.08" width="3.6" height="3.6" fill="#7862c9"/><rect x="641.53" y="176.08" width="3.6" height="3.6" fill="#7862c9"/><rect x="646.72" y="176.08" width="3.6" height="3.6" fill="#7862c9"/><rect x="651.90" y="176.08" width="3.6" height="3.6" fill="#7862c9"/><rect x="657.09" y="176.08" width="3.6" height="3.6" fill="#7862c9"/><rect x="662.28" y="176.08" width="3.6" height="3.6" fill="#7862c9"/><rect x="667.46" y="176.08" width="3.6" height="3.6" fill="#7862c9"/><rect x="672.65" y="176.08" width="3.6" height="3.6" fill="#7862c9"/><rect x="677.83" y="176.08" width="3.6" height="3.6" fill="#7862c9"/><rect x="683.02" y="176.08" width="3.6" height="3.6" fill="#7862c9"/><rect x="688.21" y="176.08" width="3.6" height="3.6" fill="#7862c9"/><rect x="693.39" y="176.08" width="3.6" height="3.6" fill="#7862c9"/><rect x="698.58" y="176.08" width="3.6" height="3.6" fill="#7862c9"/><rect x="703.76" y="176.08" width="3.6" height="3.6" fill="#7862c9"/><rect x="708.95" y="176.08" width="3.6" height="3.6" fill="#7862c9"/><rect x="714.14" y="176.08" width="3.6" height="3.6" fill="#7862c9"/><rect x="719.32" y="176.08" width="3.6" height="3.6" fill="#7862c9"/><rect x="724.51" y="176.08" width="3.6" height="3.6" fill="#7862c9"/><rect x="729.69" y="176.08" width="3.6" height="3.6" fill="#7862c9"/><rect x="734.88" y="176.08" width="3.6" height="3.6" fill="#7862c9"/><rect x="740.07" y="176.08" width="3.6" height="3.6" fill="#7862c9"/><rect x="745.25" y="176.08" width="3.6" height="3.6" fill="#7862c9"/><rect x="750.44" y="176.08" width="3.6" height="3.6" fill="#7862c9"/><rect x="755.62" y="176.08" width="3.6" height="3.6" fill="#7862c9"/><rect x="760.81" y="176.08" width="3.6" height="3.6" fill="#7862c9"/><rect x="766.00" y="176.08" width="3.6" height="3.6" fill="#7862c9"/><rect x="771.18" y="176.08" width="3.6" height="3.6" fill="#7862c9"/><rect x="776.37" y="176.08" width="3.6" height="3.6" fill="#7862c9"/><rect x="781.55" y="176.08" width="3.6" height="3.6" fill="#7862c9"/><rect x="786.74" y="176.08" width="3.6" height="3.6" fill="#7862c9"/><rect x="791.93" y="176.08" width="3.6" height="3.6" fill="#7862c9"/><rect x="797.11" y="176.08" width="3.6" height="3.6" fill="#7862c9"/><rect x="802.30" y="176.08" width="3.6" height="3.6" fill="#7862c9"/><rect x="807.48" y="176.08" width="3.6" height="3.6" fill="#7862c9"/><rect x="812.67" y="176.08" width="3.6" height="3.6" fill="#7862c9"/><rect x="817.86" y="176.08" width="3.6" height="3.6" fill="#7862c9"/><rect x="823.04" y="176.08" width="3.6" height="3.6" fill="#7862c9"/><rect x="828.23" y="176.08" width="3.6" height="3.6" fill="#7862c9"/><rect x="833.41" y="176.08" width="3.6" height="3.6" fill="#7862c9"/><rect x="838.60" y="176.08" width="3.6" height="3.6" fill="#7862c9"/><rect x="843.79" y="176.08" width="3.6" height="3.6" fill="#7862c9"/><rect x="848.97" y="176.08" width="3.6" height="3.6" fill="#7862c9"/><rect x="854.16" y="176.08" width="3.6" height="3.6" fill="#7862c9"/><rect x="859.34" y="176.08" width="3.6" height="3.6" fill="#7862c9"/><rect x="864.53" y="176.08" width="3.6" height="3.6" fill="#7862c9"/><rect x="869.72" y="176.08" width="3.6" height="3.6" fill="#7862c9"/><rect x="874.90" y="176.08" width="3.6" height="3.6" fill="#7862c9"/><rect x="880.09" y="176.08" width="3.6" height="3.6" fill="#7862c9"/><rect x="885.27" y="176.08" width="3.6" height="3.6" fill="#7862c9"/><rect x="890.46" y="176.08" width="3.6" height="3.6" fill="#7862c9"/><rect x="895.65" y="176.08" width="3.6" height="3.6" fill="#7862c9"/><rect x="900.83" y="176.08" width="3.6" height="3.6" fill="#7862c9"/><rect x="579.30" y="183.02" width="3.6" height="3.6" fill="#7862c9"/><rect x="584.49" y="183.02" width="3.6" height="3.6" fill="#7862c9"/><rect x="589.67" y="183.02" width="3.6" height="3.6" fill="#7862c9"/><rect x="594.86" y="183.02" width="3.6" height="3.6" fill="#7862c9"/><rect x="600.04" y="183.02" width="3.6" height="3.6" fill="#7862c9"/><rect x="605.23" y="183.02" width="3.6" height="3.6" fill="#7862c9"/><rect x="610.42" y="183.02" width="3.6" height="3.6" fill="#7862c9"/><rect x="615.60" y="183.02" width="3.6" height="3.6" fill="#7862c9"/><rect x="620.79" y="183.02" width="3.6" height="3.6" fill="#7862c9"/><rect x="625.97" y="183.02" width="3.6" height="3.6" fill="#7862c9"/><rect x="631.16" y="183.02" width="3.6" height="3.6" fill="#7862c9"/><rect x="636.35" y="183.02" width="3.6" height="3.6" fill="#7862c9"/><rect x="641.53" y="183.02" width="3.6" height="3.6" fill="#7862c9"/><rect x="646.72" y="183.02" width="3.6" height="3.6" fill="#7862c9"/><rect x="651.90" y="183.02" width="3.6" height="3.6" fill="#7862c9"/><rect x="657.09" y="183.02" width="3.6" height="3.6" fill="#7862c9"/><rect x="662.28" y="183.02" width="3.6" height="3.6" fill="#7862c9"/><rect x="667.46" y="183.02" width="3.6" height="3.6" fill="#7862c9"/><rect x="672.65" y="183.02" width="3.6" height="3.6" fill="#7862c9"/><rect x="677.83" y="183.02" width="3.6" height="3.6" fill="#7862c9"/><rect x="683.02" y="183.02" width="3.6" height="3.6" fill="#7862c9"/><rect x="688.21" y="183.02" width="3.6" height="3.6" fill="#7862c9"/><rect x="693.39" y="183.02" width="3.6" height="3.6" fill="#7862c9"/><rect x="698.58" y="183.02" width="3.6" height="3.6" fill="#7862c9"/><rect x="703.76" y="183.02" width="3.6" height="3.6" fill="#7862c9"/><rect x="708.95" y="183.02" width="3.6" height="3.6" fill="#7862c9"/><rect x="714.14" y="183.02" width="3.6" height="3.6" fill="#7862c9"/><rect x="719.32" y="183.02" width="3.6" height="3.6" fill="#7862c9"/><rect x="724.51" y="183.02" width="3.6" height="3.6" fill="#7862c9"/><rect x="729.69" y="183.02" width="3.6" height="3.6" fill="#7862c9"/><rect x="734.88" y="183.02" width="3.6" height="3.6" fill="#7862c9"/><rect x="740.07" y="183.02" width="3.6" height="3.6" fill="#7862c9"/><rect x="745.25" y="183.02" width="3.6" height="3.6" fill="#7862c9"/><rect x="750.44" y="183.02" width="3.6" height="3.6" fill="#7862c9"/><rect x="755.62" y="183.02" width="3.6" height="3.6" fill="#7862c9"/><rect x="760.81" y="183.02" width="3.6" height="3.6" fill="#7862c9"/><rect x="766.00" y="183.02" width="3.6" height="3.6" fill="#7862c9"/><rect x="771.18" y="183.02" width="3.6" height="3.6" fill="#7862c9"/><rect x="776.37" y="183.02" width="3.6" height="3.6" fill="#7862c9"/><rect x="781.55" y="183.02" width="3.6" height="3.6" fill="#7862c9"/><rect x="786.74" y="183.02" width="3.6" height="3.6" fill="#7862c9"/><rect x="791.93" y="183.02" width="3.6" height="3.6" fill="#7862c9"/><rect x="797.11" y="183.02" width="3.6" height="3.6" fill="#7862c9"/><rect x="802.30" y="183.02" width="3.6" height="3.6" fill="#7862c9"/><rect x="807.48" y="183.02" width="3.6" height="3.6" fill="#7862c9"/><rect x="812.67" y="183.02" width="3.6" height="3.6" fill="#7862c9"/><rect x="817.86" y="183.02" width="3.6" height="3.6" fill="#7862c9"/><rect x="823.04" y="183.02" width="3.6" height="3.6" fill="#7862c9"/><rect x="828.23" y="183.02" width="3.6" height="3.6" fill="#7862c9"/><rect x="833.41" y="183.02" width="3.6" height="3.6" fill="#7862c9"/><rect x="838.60" y="183.02" width="3.6" height="3.6" fill="#7862c9"/><rect x="843.79" y="183.02" width="3.6" height="3.6" fill="#7862c9"/><rect x="848.97" y="183.02" width="3.6" height="3.6" fill="#7862c9"/><rect x="854.16" y="183.02" width="3.6" height="3.6" fill="#7862c9"/><rect x="859.34" y="183.02" width="3.6" height="3.6" fill="#7862c9"/><rect x="864.53" y="183.02" width="3.6" height="3.6" fill="#7862c9"/><rect x="869.72" y="183.02" width="3.6" height="3.6" fill="#7862c9"/><rect x="874.90" y="183.02" width="3.6" height="3.6" fill="#7862c9"/><rect x="880.09" y="183.02" width="3.6" height="3.6" fill="#7862c9"/><rect x="885.27" y="183.02" width="3.6" height="3.6" fill="#7862c9"/><rect x="890.46" y="183.02" width="3.6" height="3.6" fill="#7862c9"/><rect x="895.65" y="183.02" width="3.6" height="3.6" fill="#7862c9"/><rect x="900.83" y="183.02" width="3.6" height="3.6" fill="#7862c9"/><rect x="579.30" y="189.96" width="3.6" height="3.6" fill="#7862c9"/><rect x="584.49" y="189.96" width="3.6" height="3.6" fill="#7862c9"/><rect x="589.67" y="189.96" width="3.6" height="3.6" fill="#7862c9"/><rect x="594.86" y="189.96" width="3.6" height="3.6" fill="#7862c9"/><rect x="600.04" y="189.96" width="3.6" height="3.6" fill="#7862c9"/><rect x="605.23" y="189.96" width="3.6" height="3.6" fill="#7862c9"/><rect x="610.42" y="189.96" width="3.6" height="3.6" fill="#7862c9"/><rect x="615.60" y="189.96" width="3.6" height="3.6" fill="#7862c9"/><rect x="620.79" y="189.96" width="3.6" height="3.6" fill="#7862c9"/><rect x="625.97" y="189.96" width="3.6" height="3.6" fill="#7862c9"/><rect x="631.16" y="189.96" width="3.6" height="3.6" fill="#7862c9"/><rect x="636.35" y="189.96" width="3.6" height="3.6" fill="#7862c9"/><rect x="641.53" y="189.96" width="3.6" height="3.6" fill="#7862c9"/><rect x="646.72" y="189.96" width="3.6" height="3.6" fill="#7862c9"/><rect x="651.90" y="189.96" width="3.6" height="3.6" fill="#7862c9"/><rect x="657.09" y="189.96" width="3.6" height="3.6" fill="#7862c9"/><rect x="662.28" y="189.96" width="3.6" height="3.6" fill="#7862c9"/><rect x="667.46" y="189.96" width="3.6" height="3.6" fill="#7862c9"/><rect x="672.65" y="189.96" width="3.6" height="3.6" fill="#7862c9"/><rect x="677.83" y="189.96" width="3.6" height="3.6" fill="#7862c9"/><rect x="683.02" y="189.96" width="3.6" height="3.6" fill="#7862c9"/><rect x="688.21" y="189.96" width="3.6" height="3.6" fill="#7862c9"/><rect x="693.39" y="189.96" width="3.6" height="3.6" fill="#7862c9"/><rect x="698.58" y="189.96" width="3.6" height="3.6" fill="#7862c9"/><rect x="703.76" y="189.96" width="3.6" height="3.6" fill="#7862c9"/><rect x="708.95" y="189.96" width="3.6" height="3.6" fill="#7862c9"/><rect x="714.14" y="189.96" width="3.6" height="3.6" fill="#7862c9"/><rect x="719.32" y="189.96" width="3.6" height="3.6" fill="#7862c9"/><rect x="724.51" y="189.96" width="3.6" height="3.6" fill="#7862c9"/><rect x="729.69" y="189.96" width="3.6" height="3.6" fill="#7862c9"/><rect x="734.88" y="189.96" width="3.6" height="3.6" fill="#7862c9"/><rect x="740.07" y="189.96" width="3.6" height="3.6" fill="#7862c9"/><rect x="745.25" y="189.96" width="3.6" height="3.6" fill="#7862c9"/><rect x="750.44" y="189.96" width="3.6" height="3.6" fill="#7862c9"/><rect x="755.62" y="189.96" width="3.6" height="3.6" fill="#7862c9"/><rect x="760.81" y="189.96" width="3.6" height="3.6" fill="#7862c9"/><rect x="766.00" y="189.96" width="3.6" height="3.6" fill="#7862c9"/><rect x="771.18" y="189.96" width="3.6" height="3.6" fill="#7862c9"/><rect x="776.37" y="189.96" width="3.6" height="3.6" fill="#7862c9"/><rect x="781.55" y="189.96" width="3.6" height="3.6" fill="#7862c9"/><rect x="786.74" y="189.96" width="3.6" height="3.6" fill="#7862c9"/><rect x="791.93" y="189.96" width="3.6" height="3.6" fill="#7862c9"/><rect x="797.11" y="189.96" width="3.6" height="3.6" fill="#7862c9"/><rect x="802.30" y="189.96" width="3.6" height="3.6" fill="#7862c9"/><rect x="807.48" y="189.96" width="3.6" height="3.6" fill="#7862c9"/><rect x="812.67" y="189.96" width="3.6" height="3.6" fill="#7862c9"/><rect x="817.86" y="189.96" width="3.6" height="3.6" fill="#7862c9"/><rect x="823.04" y="189.96" width="3.6" height="3.6" fill="#7862c9"/><rect x="828.23" y="189.96" width="3.6" height="3.6" fill="#7862c9"/><rect x="833.41" y="189.96" width="3.6" height="3.6" fill="#7862c9"/><rect x="838.60" y="189.96" width="3.6" height="3.6" fill="#7862c9"/><rect x="843.79" y="189.96" width="3.6" height="3.6" fill="#7862c9"/><rect x="848.97" y="189.96" width="3.6" height="3.6" fill="#7862c9"/><rect x="854.16" y="189.96" width="3.6" height="3.6" fill="#7862c9"/><rect x="859.34" y="189.96" width="3.6" height="3.6" fill="#7862c9"/><rect x="864.53" y="189.96" width="3.6" height="3.6" fill="#7862c9"/><rect x="869.72" y="189.96" width="3.6" height="3.6" fill="#7862c9"/><rect x="874.90" y="189.96" width="3.6" height="3.6" fill="#7862c9"/><rect x="880.09" y="189.96" width="3.6" height="3.6" fill="#7862c9"/><rect x="885.27" y="189.96" width="3.6" height="3.6" fill="#7862c9"/><rect x="890.46" y="189.96" width="3.6" height="3.6" fill="#7862c9"/><rect x="895.65" y="189.96" width="3.6" height="3.6" fill="#7862c9"/><rect x="900.83" y="189.96" width="3.6" height="3.6" fill="#7862c9"/><rect x="579.30" y="196.90" width="3.6" height="3.6" fill="#7862c9"/><rect x="584.49" y="196.90" width="3.6" height="3.6" fill="#7862c9"/><rect x="589.67" y="196.90" width="3.6" height="3.6" fill="#7862c9"/><rect x="594.86" y="196.90" width="3.6" height="3.6" fill="#7862c9"/><rect x="600.04" y="196.90" width="3.6" height="3.6" fill="#7862c9"/><rect x="605.23" y="196.90" width="3.6" height="3.6" fill="#7862c9"/><rect x="610.42" y="196.90" width="3.6" height="3.6" fill="#7862c9"/><rect x="615.60" y="196.90" width="3.6" height="3.6" fill="#7862c9"/><rect x="620.79" y="196.90" width="3.6" height="3.6" fill="#7862c9"/><rect x="625.97" y="196.90" width="3.6" height="3.6" fill="#7862c9"/><rect x="631.16" y="196.90" width="3.6" height="3.6" fill="#7862c9"/><rect x="636.35" y="196.90" width="3.6" height="3.6" fill="#7862c9"/><rect x="641.53" y="196.90" width="3.6" height="3.6" fill="#7862c9"/><rect x="646.72" y="196.90" width="3.6" height="3.6" fill="#7862c9"/><rect x="651.90" y="196.90" width="3.6" height="3.6" fill="#7862c9"/><rect x="657.09" y="196.90" width="3.6" height="3.6" fill="#7862c9"/><rect x="662.28" y="196.90" width="3.6" height="3.6" fill="#7862c9"/><rect x="667.46" y="196.90" width="3.6" height="3.6" fill="#7862c9"/><rect x="672.65" y="196.90" width="3.6" height="3.6" fill="#7862c9"/><rect x="677.83" y="196.90" width="3.6" height="3.6" fill="#7862c9"/><rect x="683.02" y="196.90" width="3.6" height="3.6" fill="#7862c9"/><rect x="688.21" y="196.90" width="3.6" height="3.6" fill="#7862c9"/><rect x="693.39" y="196.90" width="3.6" height="3.6" fill="#7862c9"/><rect x="698.58" y="196.90" width="3.6" height="3.6" fill="#7862c9"/><rect x="703.76" y="196.90" width="3.6" height="3.6" fill="#7862c9"/><rect x="708.95" y="196.90" width="3.6" height="3.6" fill="#7862c9"/><rect x="714.14" y="196.90" width="3.6" height="3.6" fill="#7862c9"/><rect x="719.32" y="196.90" width="3.6" height="3.6" fill="#7862c9"/><rect x="724.51" y="196.90" width="3.6" height="3.6" fill="#7862c9"/><rect x="729.69" y="196.90" width="3.6" height="3.6" fill="#7862c9"/><rect x="734.88" y="196.90" width="3.6" height="3.6" fill="#7862c9"/><rect x="740.07" y="196.90" width="3.6" height="3.6" fill="#7862c9"/><rect x="745.25" y="196.90" width="3.6" height="3.6" fill="#7862c9"/><rect x="750.44" y="196.90" width="3.6" height="3.6" fill="#7862c9"/><rect x="755.62" y="196.90" width="3.6" height="3.6" fill="#7862c9"/><rect x="760.81" y="196.90" width="3.6" height="3.6" fill="#7862c9"/><rect x="766.00" y="196.90" width="3.6" height="3.6" fill="#7862c9"/><rect x="771.18" y="196.90" width="3.6" height="3.6" fill="#7862c9"/><rect x="776.37" y="196.90" width="3.6" height="3.6" fill="#7862c9"/><rect x="781.55" y="196.90" width="3.6" height="3.6" fill="#7862c9"/><rect x="786.74" y="196.90" width="3.6" height="3.6" fill="#7862c9"/><rect x="791.93" y="196.90" width="3.6" height="3.6" fill="#7862c9"/><rect x="797.11" y="196.90" width="3.6" height="3.6" fill="#7862c9"/><rect x="802.30" y="196.90" width="3.6" height="3.6" fill="#7862c9"/><rect x="807.48" y="196.90" width="3.6" height="3.6" fill="#7862c9"/><rect x="812.67" y="196.90" width="3.6" height="3.6" fill="#7862c9"/><rect x="817.86" y="196.90" width="3.6" height="3.6" fill="#7862c9"/><rect x="823.04" y="196.90" width="3.6" height="3.6" fill="#7862c9"/><rect x="828.23" y="196.90" width="3.6" height="3.6" fill="#7862c9"/><rect x="833.41" y="196.90" width="3.6" height="3.6" fill="#7862c9"/><rect x="838.60" y="196.90" width="3.6" height="3.6" fill="#7862c9"/><rect x="843.79" y="196.90" width="3.6" height="3.6" fill="#7862c9"/><rect x="848.97" y="196.90" width="3.6" height="3.6" fill="#7862c9"/><rect x="854.16" y="196.90" width="3.6" height="3.6" fill="#7862c9"/><rect x="859.34" y="196.90" width="3.6" height="3.6" fill="#7862c9"/><rect x="864.53" y="196.90" width="3.6" height="3.6" fill="#7862c9"/><rect x="869.72" y="196.90" width="3.6" height="3.6" fill="#7862c9"/><rect x="874.90" y="196.90" width="3.6" height="3.6" fill="#7862c9"/><rect x="880.09" y="196.90" width="3.6" height="3.6" fill="#7862c9"/><rect x="885.27" y="196.90" width="3.6" height="3.6" fill="#7862c9"/><rect x="890.46" y="196.90" width="3.6" height="3.6" fill="#7862c9"/><rect x="895.65" y="196.90" width="3.6" height="3.6" fill="#7862c9"/><rect x="900.83" y="196.90" width="3.6" height="3.6" fill="#7862c9"/></svg><div style="position:absolute;left:575.8px;top:211.37px;width:331.70px;height:82.30px;background:#050507;border-radius:6.5px"></div><div style="position:absolute;left:577.2px;top:212.97px;width:328.79999999999995px;height:79.30px;background:#cc12a8;border-radius:5px"></div><div style="position:absolute;left:584px;top:219.10px;font-size:19.8px;line-height:19.8px;color:#fff;white-space:nowrap;letter-spacing:0.15px;-webkit-text-stroke:0.4px #fff;">Kick 1 <span style="display:inline-block;transform:scaleX(1.45)">-</span> Solaris</div><svg style="position:absolute;left:577.2px;top:212.97px;" width="328.79999999999995" height="79.30" viewBox="577.2 212.97 328.79999999999995 79.30"><rect x="579.60" y="252.27" width="3.1" height="31.10" fill="#d948bd"/><rect x="584.79" y="252.27" width="3.1" height="31.10" fill="#d948bd"/><rect x="589.97" y="252.27" width="3.1" height="31.10" fill="#d948bd"/><rect x="595.16" y="252.27" width="3.1" height="31.10" fill="#d948bd"/><rect x="600.34" y="252.27" width="3.1" height="31.10" fill="#ffb6f2"/><rect x="605.53" y="252.27" width="3.1" height="31.10" fill="#ffb6f2"/><rect x="610.72" y="252.27" width="3.1" height="31.10" fill="#d948bd"/><rect x="615.90" y="252.27" width="3.1" height="31.10" fill="#d948bd"/><rect x="621.09" y="252.27" width="3.1" height="31.10" fill="#ffb6f2"/><rect x="626.27" y="252.27" width="3.1" height="31.10" fill="#d948bd"/><rect x="631.46" y="252.27" width="3.1" height="31.10" fill="#d948bd"/><rect x="636.65" y="252.27" width="3.1" height="31.10" fill="#d948bd"/><rect x="641.83" y="252.27" width="3.1" height="31.10" fill="#d948bd"/><rect x="647.02" y="252.27" width="3.1" height="31.10" fill="#ffb6f2"/><rect x="652.20" y="252.27" width="3.1" height="31.10" fill="#d948bd"/><rect x="657.39" y="252.27" width="3.1" height="31.10" fill="#ffb6f2"/><rect x="662.58" y="252.27" width="3.1" height="31.10" fill="#d948bd"/><rect x="667.76" y="252.27" width="3.1" height="31.10" fill="#d948bd"/><rect x="672.95" y="252.27" width="3.1" height="31.10" fill="#d948bd"/><rect x="678.13" y="252.27" width="3.1" height="31.10" fill="#d948bd"/><rect x="683.32" y="252.27" width="3.1" height="31.10" fill="#ffb6f2"/><rect x="688.51" y="252.27" width="3.1" height="31.10" fill="#ffb6f2"/><rect x="693.69" y="252.27" width="3.1" height="31.10" fill="#d948bd"/><rect x="698.88" y="252.27" width="3.1" height="31.10" fill="#d948bd"/><rect x="704.06" y="252.27" width="3.1" height="31.10" fill="#ffb6f2"/><rect x="709.25" y="252.27" width="3.1" height="31.10" fill="#d948bd"/><rect x="714.44" y="252.27" width="3.1" height="31.10" fill="#d948bd"/><rect x="719.62" y="252.27" width="3.1" height="31.10" fill="#d948bd"/><rect x="724.81" y="252.27" width="3.1" height="31.10" fill="#d948bd"/><rect x="729.99" y="252.27" width="3.1" height="31.10" fill="#ffb6f2"/><rect x="735.18" y="252.27" width="3.1" height="31.10" fill="#d948bd"/><rect x="740.37" y="252.27" width="3.1" height="31.10" fill="#ffb6f2"/><rect x="745.55" y="252.27" width="3.1" height="31.10" fill="#d948bd"/><rect x="750.74" y="252.27" width="3.1" height="31.10" fill="#d948bd"/><rect x="755.92" y="252.27" width="3.1" height="31.10" fill="#d948bd"/><rect x="761.11" y="252.27" width="3.1" height="31.10" fill="#d948bd"/><rect x="766.30" y="252.27" width="3.1" height="31.10" fill="#ffb6f2"/><rect x="771.48" y="252.27" width="3.1" height="31.10" fill="#ffb6f2"/><rect x="776.67" y="252.27" width="3.1" height="31.10" fill="#d948bd"/><rect x="781.85" y="252.27" width="3.1" height="31.10" fill="#d948bd"/><rect x="787.04" y="252.27" width="3.1" height="31.10" fill="#ffb6f2"/><rect x="792.23" y="252.27" width="3.1" height="31.10" fill="#d948bd"/><rect x="797.41" y="252.27" width="3.1" height="31.10" fill="#d948bd"/><rect x="802.60" y="252.27" width="3.1" height="31.10" fill="#d948bd"/><rect x="807.78" y="252.27" width="3.1" height="31.10" fill="#d948bd"/><rect x="812.97" y="252.27" width="3.1" height="31.10" fill="#ffb6f2"/><rect x="818.16" y="252.27" width="3.1" height="31.10" fill="#d948bd"/><rect x="823.34" y="252.27" width="3.1" height="31.10" fill="#ffb6f2"/><rect x="828.53" y="252.27" width="3.1" height="31.10" fill="#d948bd"/><rect x="833.71" y="252.27" width="3.1" height="31.10" fill="#d948bd"/><rect x="838.90" y="252.27" width="3.1" height="31.10" fill="#d948bd"/><rect x="844.09" y="252.27" width="3.1" height="31.10" fill="#d948bd"/><rect x="849.27" y="252.27" width="3.1" height="31.10" fill="#ffb6f2"/><rect x="854.46" y="252.27" width="3.1" height="31.10" fill="#ffb6f2"/><rect x="859.64" y="252.27" width="3.1" height="31.10" fill="#d948bd"/><rect x="864.83" y="252.27" width="3.1" height="31.10" fill="#d948bd"/><rect x="870.02" y="252.27" width="3.1" height="31.10" fill="#ffb6f2"/><rect x="875.20" y="252.27" width="3.1" height="31.10" fill="#d948bd"/><rect x="880.39" y="252.27" width="3.1" height="31.10" fill="#d948bd"/><rect x="885.57" y="252.27" width="3.1" height="31.10" fill="#d948bd"/><rect x="890.76" y="252.27" width="3.1" height="31.10" fill="#d948bd"/><rect x="895.95" y="252.27" width="3.1" height="31.10" fill="#ffb6f2"/><rect x="901.13" y="252.27" width="3.1" height="31.10" fill="#d948bd"/></svg><div style="position:absolute;left:575.8px;top:380.91px;width:331.70px;height:82.30px;background:#050507;border-radius:6.5px"></div><div style="position:absolute;left:577.2px;top:382.51px;width:328.79999999999995px;height:79.30px;background:#cb7b13;border-radius:5px"></div><div style="position:absolute;left:584px;top:389.10px;font-size:19.8px;line-height:19.8px;color:#fff;white-space:nowrap;letter-spacing:0.15px;-webkit-text-stroke:0.4px #fff;">Snare 1 <span style="display:inline-block;transform:scaleX(1.45)">-</span> Solaris</div><svg style="position:absolute;left:577.2px;top:382.51px;" width="328.79999999999995" height="79.30" viewBox="577.2 382.51 328.79999999999995 79.30"><rect x="579.60" y="421.81" width="3.1" height="31.10" fill="#d8964a"/><rect x="584.79" y="421.81" width="3.1" height="31.10" fill="#d8964a"/><rect x="589.97" y="421.81" width="3.1" height="31.10" fill="#ffe1b3"/><rect x="595.16" y="421.81" width="3.1" height="31.10" fill="#d8964a"/><rect x="600.34" y="421.81" width="3.1" height="31.10" fill="#d8964a"/><rect x="605.53" y="421.81" width="3.1" height="31.10" fill="#d8964a"/><rect x="610.72" y="421.81" width="3.1" height="31.10" fill="#d8964a"/><rect x="615.90" y="421.81" width="3.1" height="31.10" fill="#ffe1b3"/><rect x="621.09" y="421.81" width="3.1" height="31.10" fill="#d8964a"/><rect x="626.27" y="421.81" width="3.1" height="31.10" fill="#ffe1b3"/><rect x="631.46" y="421.81" width="3.1" height="31.10" fill="#d8964a"/><rect x="636.65" y="421.81" width="3.1" height="31.10" fill="#d8964a"/><rect x="641.83" y="421.81" width="3.1" height="31.10" fill="#d8964a"/><rect x="647.02" y="421.81" width="3.1" height="31.10" fill="#d8964a"/><rect x="652.20" y="421.81" width="3.1" height="31.10" fill="#d8964a"/><rect x="657.39" y="421.81" width="3.1" height="31.10" fill="#d8964a"/><rect x="662.58" y="421.81" width="3.1" height="31.10" fill="#d8964a"/><rect x="667.76" y="421.81" width="3.1" height="31.10" fill="#d8964a"/><rect x="672.95" y="421.81" width="3.1" height="31.10" fill="#ffe1b3"/><rect x="678.13" y="421.81" width="3.1" height="31.10" fill="#d8964a"/><rect x="683.32" y="421.81" width="3.1" height="31.10" fill="#d8964a"/><rect x="688.51" y="421.81" width="3.1" height="31.10" fill="#d8964a"/><rect x="693.69" y="421.81" width="3.1" height="31.10" fill="#d8964a"/><rect x="698.88" y="421.81" width="3.1" height="31.10" fill="#ffe1b3"/><rect x="704.06" y="421.81" width="3.1" height="31.10" fill="#d8964a"/><rect x="709.25" y="421.81" width="3.1" height="31.10" fill="#ffe1b3"/><rect x="714.44" y="421.81" width="3.1" height="31.10" fill="#d8964a"/><rect x="719.62" y="421.81" width="3.1" height="31.10" fill="#d8964a"/><rect x="724.81" y="421.81" width="3.1" height="31.10" fill="#d8964a"/><rect x="729.99" y="421.81" width="3.1" height="31.10" fill="#d8964a"/><rect x="735.18" y="421.81" width="3.1" height="31.10" fill="#d8964a"/><rect x="740.37" y="421.81" width="3.1" height="31.10" fill="#d8964a"/><rect x="745.55" y="421.81" width="3.1" height="31.10" fill="#d8964a"/><rect x="750.74" y="421.81" width="3.1" height="31.10" fill="#d8964a"/><rect x="755.92" y="421.81" width="3.1" height="31.10" fill="#ffe1b3"/><rect x="761.11" y="421.81" width="3.1" height="31.10" fill="#d8964a"/><rect x="766.30" y="421.81" width="3.1" height="31.10" fill="#d8964a"/><rect x="771.48" y="421.81" width="3.1" height="31.10" fill="#d8964a"/><rect x="776.67" y="421.81" width="3.1" height="31.10" fill="#d8964a"/><rect x="781.85" y="421.81" width="3.1" height="31.10" fill="#ffe1b3"/><rect x="787.04" y="421.81" width="3.1" height="31.10" fill="#d8964a"/><rect x="792.23" y="421.81" width="3.1" height="31.10" fill="#ffe1b3"/><rect x="797.41" y="421.81" width="3.1" height="31.10" fill="#d8964a"/><rect x="802.60" y="421.81" width="3.1" height="31.10" fill="#d8964a"/><rect x="807.78" y="421.81" width="3.1" height="31.10" fill="#d8964a"/><rect x="812.97" y="421.81" width="3.1" height="31.10" fill="#d8964a"/><rect x="818.16" y="421.81" width="3.1" height="31.10" fill="#d8964a"/><rect x="823.34" y="421.81" width="3.1" height="31.10" fill="#d8964a"/><rect x="828.53" y="421.81" width="3.1" height="31.10" fill="#d8964a"/><rect x="833.71" y="421.81" width="3.1" height="31.10" fill="#d8964a"/><rect x="838.90" y="421.81" width="3.1" height="31.10" fill="#ffe1b3"/><rect x="844.09" y="421.81" width="3.1" height="31.10" fill="#d8964a"/><rect x="849.27" y="421.81" width="3.1" height="31.10" fill="#d8964a"/><rect x="854.46" y="421.81" width="3.1" height="31.10" fill="#d8964a"/><rect x="859.64" y="421.81" width="3.1" height="31.10" fill="#d8964a"/><rect x="864.83" y="421.81" width="3.1" height="31.10" fill="#ffe1b3"/><rect x="870.02" y="421.81" width="3.1" height="31.10" fill="#d8964a"/><rect x="875.20" y="421.81" width="3.1" height="31.10" fill="#ffe1b3"/><rect x="880.39" y="421.81" width="3.1" height="31.10" fill="#d8964a"/><rect x="885.57" y="421.81" width="3.1" height="31.10" fill="#d8964a"/><rect x="890.76" y="421.81" width="3.1" height="31.10" fill="#d8964a"/><rect x="895.95" y="421.81" width="3.1" height="31.10" fill="#d8964a"/><rect x="901.13" y="421.81" width="3.1" height="31.10" fill="#d8964a"/></svg><div style="position:absolute;left:575.8px;top:550.45px;width:331.70px;height:81.55px;background:#050507;border-radius:6.5px"></div><div style="position:absolute;left:577.2px;top:552.05px;width:328.79999999999995px;height:78.55px;background:#cb7b13;border-radius:5px"></div><div style="position:absolute;left:584px;top:558.10px;font-size:19.8px;line-height:19.8px;color:#fff;white-space:nowrap;letter-spacing:0.15px;-webkit-text-stroke:0.4px #fff;">Clap 2 <span style="display:inline-block;transform:scaleX(1.45)">-</span> Solaris</div><svg style="position:absolute;left:577.2px;top:552.05px;" width="328.79999999999995" height="78.55" viewBox="577.2 552.05 328.79999999999995 78.55"><rect x="579.60" y="591.35" width="3.1" height="31.10" fill="#ffe1b3"/><rect x="584.79" y="591.35" width="3.1" height="31.10" fill="#d8964a"/><rect x="589.97" y="591.35" width="3.1" height="31.10" fill="#d8964a"/><rect x="595.16" y="591.35" width="3.1" height="31.10" fill="#d8964a"/><rect x="600.34" y="591.35" width="3.1" height="31.10" fill="#ffe1b3"/><rect x="605.53" y="591.35" width="3.1" height="31.10" fill="#d8964a"/><rect x="610.72" y="591.35" width="3.1" height="31.10" fill="#ffe1b3"/><rect x="615.90" y="591.35" width="3.1" height="31.10" fill="#d8964a"/><rect x="621.09" y="591.35" width="3.1" height="31.10" fill="#d8964a"/><rect x="626.27" y="591.35" width="3.1" height="31.10" fill="#d8964a"/><rect x="631.46" y="591.35" width="3.1" height="31.10" fill="#ffe1b3"/><rect x="636.65" y="591.35" width="3.1" height="31.10" fill="#ffe1b3"/><rect x="641.83" y="591.35" width="3.1" height="31.10" fill="#d8964a"/><rect x="647.02" y="591.35" width="3.1" height="31.10" fill="#d8964a"/><rect x="652.20" y="591.35" width="3.1" height="31.10" fill="#d8964a"/><rect x="657.39" y="591.35" width="3.1" height="31.10" fill="#d8964a"/><rect x="662.58" y="591.35" width="3.1" height="31.10" fill="#ffe1b3"/><rect x="667.76" y="591.35" width="3.1" height="31.10" fill="#d8964a"/><rect x="672.95" y="591.35" width="3.1" height="31.10" fill="#d8964a"/><rect x="678.13" y="591.35" width="3.1" height="31.10" fill="#d8964a"/><rect x="683.32" y="591.35" width="3.1" height="31.10" fill="#ffe1b3"/><rect x="688.51" y="591.35" width="3.1" height="31.10" fill="#d8964a"/><rect x="693.69" y="591.35" width="3.1" height="31.10" fill="#ffe1b3"/><rect x="698.88" y="591.35" width="3.1" height="31.10" fill="#d8964a"/><rect x="704.06" y="591.35" width="3.1" height="31.10" fill="#d8964a"/><rect x="709.25" y="591.35" width="3.1" height="31.10" fill="#d8964a"/><rect x="714.44" y="591.35" width="3.1" height="31.10" fill="#ffe1b3"/><rect x="719.62" y="591.35" width="3.1" height="31.10" fill="#ffe1b3"/><rect x="724.81" y="591.35" width="3.1" height="31.10" fill="#d8964a"/><rect x="729.99" y="591.35" width="3.1" height="31.10" fill="#d8964a"/><rect x="735.18" y="591.35" width="3.1" height="31.10" fill="#d8964a"/><rect x="740.37" y="591.35" width="3.1" height="31.10" fill="#d8964a"/><rect x="745.55" y="591.35" width="3.1" height="31.10" fill="#ffe1b3"/><rect x="750.74" y="591.35" width="3.1" height="31.10" fill="#d8964a"/><rect x="755.92" y="591.35" width="3.1" height="31.10" fill="#d8964a"/><rect x="761.11" y="591.35" width="3.1" height="31.10" fill="#d8964a"/><rect x="766.30" y="591.35" width="3.1" height="31.10" fill="#ffe1b3"/><rect x="771.48" y="591.35" width="3.1" height="31.10" fill="#d8964a"/><rect x="776.67" y="591.35" width="3.1" height="31.10" fill="#ffe1b3"/><rect x="781.85" y="591.35" width="3.1" height="31.10" fill="#d8964a"/><rect x="787.04" y="591.35" width="3.1" height="31.10" fill="#d8964a"/><rect x="792.23" y="591.35" width="3.1" height="31.10" fill="#d8964a"/><rect x="797.41" y="591.35" width="3.1" height="31.10" fill="#ffe1b3"/><rect x="802.60" y="591.35" width="3.1" height="31.10" fill="#ffe1b3"/><rect x="807.78" y="591.35" width="3.1" height="31.10" fill="#d8964a"/><rect x="812.97" y="591.35" width="3.1" height="31.10" fill="#d8964a"/><rect x="818.16" y="591.35" width="3.1" height="31.10" fill="#d8964a"/><rect x="823.34" y="591.35" width="3.1" height="31.10" fill="#d8964a"/><rect x="828.53" y="591.35" width="3.1" height="31.10" fill="#ffe1b3"/><rect x="833.71" y="591.35" width="3.1" height="31.10" fill="#d8964a"/><rect x="838.90" y="591.35" width="3.1" height="31.10" fill="#d8964a"/><rect x="844.09" y="591.35" width="3.1" height="31.10" fill="#d8964a"/><rect x="849.27" y="591.35" width="3.1" height="31.10" fill="#ffe1b3"/><rect x="854.46" y="591.35" width="3.1" height="31.10" fill="#d8964a"/><rect x="859.64" y="591.35" width="3.1" height="31.10" fill="#ffe1b3"/><rect x="864.83" y="591.35" width="3.1" height="31.10" fill="#d8964a"/><rect x="870.02" y="591.35" width="3.1" height="31.10" fill="#d8964a"/><rect x="875.20" y="591.35" width="3.1" height="31.10" fill="#d8964a"/><rect x="880.39" y="591.35" width="3.1" height="31.10" fill="#ffe1b3"/><rect x="885.57" y="591.35" width="3.1" height="31.10" fill="#ffe1b3"/><rect x="890.76" y="591.35" width="3.1" height="31.10" fill="#d8964a"/><rect x="895.95" y="591.35" width="3.1" height="31.10" fill="#d8964a"/><rect x="901.13" y="591.35" width="3.1" height="31.10" fill="#d8964a"/></svg><svg style="position:absolute;left:555px;top:90px;" width="40" height="545" viewBox="555 90 40 545"><path d="M562.5 95 L586.5 95 Q589.5 95 589.5 98 L589.5 110.5 L575 123.8 L560 110.5 L560 98 Q560 95 562.5 95 Z" fill="#a3a3a3"/><rect x="573.8" y="97" width="2.1" height="540" fill="#fff"/></svg><div style="position:absolute;left:1100px;top:0px;width:2px;height:634px;background:#fff"></div><div style="position:absolute;left:0px;top:633px;width:1102px;height:1px;background:#fff"></div>
</div></body></html>
